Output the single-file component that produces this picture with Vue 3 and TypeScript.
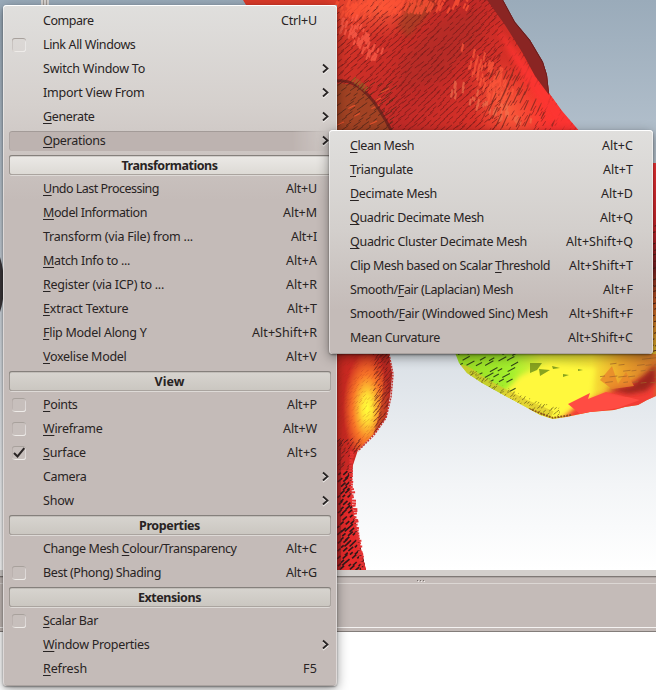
<script setup lang="ts">
import type { Directive } from 'vue'

interface Item {
  kind?: 'heading'
  label: string
  width: number
  key?: string
  keys?: string
  keysWidth?: number
  check?: boolean
  checked?: boolean
  sub?: boolean
  active?: boolean
  light?: boolean
}

const mainItems: Item[] = [
  { label: 'Compare', width: 50.5, keys: 'Ctrl+U', keysWidth: 36 },
  { label: 'Link All Windows', width: 92.5, check: true },
  { label: 'Switch Window To', width: 102, sub: true },
  { label: 'Import View From', width: 101.5, sub: true },
  { label: 'Generate', width: 51.5, key: 'G', sub: true },
  { label: 'Operations', width: 62.5, key: 'O', sub: true, active: true },
  { kind: 'heading', label: 'Transformations', width: 96, light: true },
  { label: 'Undo Last Processing', width: 116, key: 'U', keys: 'Alt+U', keysWidth: 31 },
  { label: 'Model Information', width: 104, key: 'M', keys: 'Alt+M', keysWidth: 34 },
  { label: 'Transform (via File) from ...', width: 150, keys: 'Alt+I', keysWidth: 26 },
  { label: 'Match Info to ...', width: 87, key: 'M', keys: 'Alt+A', keysWidth: 31 },
  { label: 'Register (via ICP) to ...', width: 121, key: 'R', keys: 'Alt+R', keysWidth: 31 },
  { label: 'Extract Texture', width: 85.5, key: 'E', keys: 'Alt+T', keysWidth: 30 },
  { label: 'Flip Model Along Y', width: 103.5, key: 'F', keys: 'Alt+Shift+R', keysWidth: 65 },
  { label: 'Voxelise Model', width: 83.5, key: 'V', keys: 'Alt+V', keysWidth: 31 },
  { kind: 'heading', label: 'View', width: 30 },
  { label: 'Points', width: 34.5, key: 'P', check: true, keys: 'Alt+P', keysWidth: 30 },
  { label: 'Wireframe', width: 59.5, key: 'W', check: true, keys: 'Alt+W', keysWidth: 34 },
  { label: 'Surface', width: 43, key: 'S', check: true, checked: true, keys: 'Alt+S', keysWidth: 30 },
  { label: 'Camera', width: 43.5, sub: true },
  { label: 'Show', width: 31, sub: true },
  { kind: 'heading', label: 'Properties', width: 61 },
  { label: 'Change Mesh Colour/Transparency', width: 193.5, key: 'C', keys: 'Alt+C', keysWidth: 31 },
  { label: 'Best (Phong) Shading', width: 118, check: true, keys: 'Alt+G', keysWidth: 31 },
  { kind: 'heading', label: 'Extensions', width: 63 },
  { label: 'Scalar Bar', width: 55, key: 'S', check: true },
  { label: 'Window Properties', width: 106.5, key: 'W', sub: true },
  { label: 'Refresh', width: 44, key: 'R', keys: 'F5', keysWidth: 14 },
]

const subItems: Item[] = [
  { label: 'Clean Mesh', width: 64, key: 'C', keys: 'Alt+C', keysWidth: 31 },
  { label: 'Triangulate', width: 63, key: 'T', keys: 'Alt+T', keysWidth: 30 },
  { label: 'Decimate Mesh', width: 87, key: 'D', keys: 'Alt+D', keysWidth: 32 },
  { label: 'Quadric Decimate Mesh', width: 134, key: 'Q', keys: 'Alt+Q', keysWidth: 33 },
  { label: 'Quadric Cluster Decimate Mesh', width: 177, key: 'Q', keys: 'Alt+Shift+Q', keysWidth: 67 },
  { label: 'Clip Mesh based on Scalar Threshold', width: 200, key: 'T', keys: 'Alt+Shift+T', keysWidth: 64 },
  { label: 'Smooth/Fair (Laplacian) Mesh', width: 163, key: 'F', keys: 'Alt+F', keysWidth: 30 },
  { label: 'Smooth/Fair (Windowed Sinc) Mesh', width: 198, key: 'F', keys: 'Alt+Shift+F', keysWidth: 64 },
  { label: 'Mean Curvature', width: 90, keys: 'Alt+Shift+C', keysWidth: 65 },
]

// Splits a label around its mnemonic; for the "Colour" entry the second capital C is the mnemonic.
function split(item: Item): [string, string, string] {
  if (!item.key) return [item.label, '', '']
  const at = item.label.startsWith('Change') ? item.label.indexOf('Colour') : item.label.indexOf(item.key)
  return [item.label.slice(0, at), item.key, item.label.slice(at + 1)]
}

// Tracks the text so that it fills the given column width.
const vFit: Directive<HTMLElement, number> = {
  mounted(el, binding) {
    const natural = el.getBoundingClientRect().width
    const count = (el.textContent ?? '').length
    el.style.letterSpacing = `${(binding.value - natural) / count}px`
  },
}

let seed = 7
function rnd(): number {
  seed = (seed * 16807) % 2147483647
  return seed / 2147483647
}

// Short slanted facets laid on a jittered grid.
function facets(x0: number, y0: number, x1: number, y1: number, dx: number, dy: number, slope: number, keep: number): string {
  let d = ''
  let row = 0
  for (let y = y0; y < y1; y += dy, row++) {
    for (let x = x0 + (row % 2) * dx * 0.5; x < x1; x += dx) {
      if (rnd() > keep) continue
      const px = x + rnd() * 1.6
      const py = y + rnd() * 1.6
      const len = dx * (0.45 + rnd() * 0.5)
      d += `M${px.toFixed(1)} ${py.toFixed(1)}l${len.toFixed(1)} ${(-len * slope).toFixed(1)}`
    }
  }
  return d
}

// Facets scattered around a centre line, thinning out with distance from it.
function scatter(x0: number, y0: number, x1: number, y1: number, spread: number, count: number, w: number, h: number): string {
  let d = ''
  for (let i = 0; i < count; i++) {
    const t = rnd()
    const off = (rnd() + rnd() - 1) * spread
    const x = x0 + (x1 - x0) * t + off
    const y = y0 + (y1 - y0) * t + (rnd() - 0.5) * spread * 0.6
    const s = 0.4 + rnd() * 0.8
    d += `M${x.toFixed(1)} ${y.toFixed(1)}l${(w * s).toFixed(1)} ${(-h * s).toFixed(1)}l${(1 + s).toFixed(1)} ${(h * 0.15).toFixed(1)}l${(-w * s).toFixed(1)} ${(h * s).toFixed(1)}z`
  }
  return d
}

const upperDark = facets(337, 0, 500, 132, 6.4, 3.4, 0.8, 0.85)
const upperDots = facets(480, 40, 580, 132, 4, 5, 1.6, 0.4)
const brightTop = scatter(345, 12, 455, 6, 22, 110, 4, 9)
const brightLeft = scatter(342, 20, 372, 58, 16, 45, 2.5, 7)
const brightMid = scatter(470, 55, 508, 108, 18, 70, 2, 9)
const brightLow = scatter(448, 90, 520, 125, 20, 40, 1.2, 7)
const upperSpots = facets(488, 78, 552, 130, 7, 8, 2.2, 0.4)
const brownLines = facets(337, 85, 390, 132, 8, 5, 0.7, 0.9)
const brownSparks = facets(337, 92, 385, 132, 11, 8, 0.5, 0.4)
const lobeDots = facets(337, 354, 394, 450, 3.5, 3.5, 1, 0.55)
const lobeEdge = facets(373, 354, 396, 440, 4, 2.6, 1.2, 0.9)
const neckDark = facets(337, 474, 368, 572, 5, 3.8, 0.9, 0.85)
const neckFine = facets(337, 440, 358, 474, 4, 3, 0.9, 0.7)
const greenLines = facets(457, 354, 512, 396, 9, 5.5, 0.55, 0.65)
const rimLines = facets(455, 372, 560, 420, 3.4, 3, 0.8, 0.6)
const orangeLines = facets(600, 352, 656, 384, 9, 6, 0.12, 0.6)
const sideLines = facets(650, 225, 658, 354, 4, 6, 0.3, 0.9)
const fringe = Array.from({ length: 44 }, (_, i) => {
  const y = 452 + i * 2.7
  const t = i / 43
  const x = 353 - Math.sin(Math.min(1, t * 2) * Math.PI) * 1.5 + t * t * 11
  return `M${(x - 3).toFixed(1)} ${y.toFixed(1)}l${(3 + rnd() * 2).toFixed(1)} ${(rnd() * 2 - 1).toFixed(1)}`
}).join('')
</script>

<template>
  <div class="screen">
    <svg class="scene" width="656" height="570" viewBox="0 0 656 570">
      <defs>
        <linearGradient id="sky" x1="0" y1="0" x2="0" y2="1">
          <stop offset="0" stop-color="#9aabba" />
          <stop offset=".25" stop-color="#b3c0cc" />
          <stop offset=".62" stop-color="#dae0e6" />
          <stop offset=".85" stop-color="#f3f5f7" />
          <stop offset="1" stop-color="#fff" />
        </linearGradient>
        <linearGradient id="upper" gradientUnits="userSpaceOnUse" x1="340" y1="0" x2="560" y2="130">
          <stop offset="0" stop-color="#dc3a29" />
          <stop offset=".2" stop-color="#cd2f27" />
          <stop offset=".45" stop-color="#c12a27" />
          <stop offset=".7" stop-color="#d83128" />
          <stop offset=".88" stop-color="#f8392f" />
          <stop offset="1" stop-color="#ff3434" />
        </linearGradient>
        <radialGradient id="glow">
          <stop offset="0" stop-color="#ff6a42" />
          <stop offset="1" stop-color="#ff5136" stop-opacity="0" />
        </radialGradient>
        <radialGradient id="lobe" gradientUnits="userSpaceOnUse" cx="0" cy="0" r="1" gradientTransform="translate(367 408) scale(24 56)">
          <stop offset="0" stop-color="#ffff3a" />
          <stop offset=".22" stop-color="#ffe236" />
          <stop offset=".6" stop-color="#f87628" />
          <stop offset="1" stop-color="#cb2a22" />
        </radialGradient>
        <linearGradient id="dish" gradientUnits="userSpaceOnUse" x1="455" y1="365" x2="656" y2="365">
          <stop offset="0" stop-color="#9adb24" />
          <stop offset=".28" stop-color="#a4f02d" />
          <stop offset=".43" stop-color="#e6f23a" />
          <stop offset=".68" stop-color="#f7e536" />
          <stop offset=".83" stop-color="#eca42a" />
          <stop offset="1" stop-color="#d1762a" />
        </linearGradient>
        <linearGradient id="side" gradientUnits="userSpaceOnUse" x1="0" y1="163" x2="0" y2="354">
          <stop offset="0" stop-color="#f23336" />
          <stop offset=".35" stop-color="#c7252b" />
          <stop offset=".55" stop-color="#751f22" />
          <stop offset=".75" stop-color="#ca6024" />
          <stop offset="1" stop-color="#d9b22b" />
        </linearGradient>
        <clipPath id="upperClip"><path d="M243 0H503L515 22L530 40L543 62L547 75L549 93L562 111L580 132H337V5H246Z" /></clipPath>
        <clipPath id="lobeClip"><path d="M330 350H388L392 374L390 395L386 417L374 434L358 450L353 465L351 485L352 505L357 530L361 549L366 570H330Z" /></clipPath>
        <clipPath id="dishClip"><path d="M454 350L459 363L467 373L482 383L500 393L524 406L540 415L553 419L566 417L590 412L614 410L625 407L638 405L647 400L656 396V350Z" /></clipPath>
        <clipPath id="rimClip"><path d="M450 362L467 366L500 384L535 401L560 408V424H450Z" /></clipPath>
        <filter id="soft"><feGaussianBlur stdDeviation="2.5" /></filter>
        <filter id="softer" x="-30%" y="-30%" width="160%" height="160%"><feGaussianBlur stdDeviation="5" /></filter>
      </defs>

      <rect width="656" height="570" fill="url(#sky)" />
      <path d="M0 257Q4 270 4 285T0 312Z" fill="#3b3639" />
      <path d="M41 0h8v6h-8z" fill="#d9d5d2" />
      <path d="M43.500 0v6M46.500 0v6" stroke="#a49d98" />

      <g clip-path="url(#upperClip)">
        <rect x="240" width="345" height="135" fill="url(#upper)" />
        <ellipse cx="380" cy="6" rx="56" ry="34" fill="url(#glow)" opacity=".8" />
        <ellipse cx="506" cy="108" rx="34" ry="56" fill="url(#glow)" opacity=".8" transform="rotate(-28 506 108)" />
        <path d="M398 26L410 0L440 0L408 38Z" fill="#983f22" opacity=".65" filter="url(#soft)" />
        <path d="M400 60L440 20L480 10L480 40L440 80L400 90Z" fill="#a52f25" opacity=".4" filter="url(#softer)" />
        <path :d="upperDark" stroke="#6e1c1a" stroke-width=".8" opacity=".85" />
        <path :d="upperDots" stroke="#6b1a1c" stroke-width=".9" opacity=".6" />
        <path :d="brightTop" fill="#ff5335" opacity=".75" />
        <path :d="brightLeft" fill="#fd5e49" opacity=".75" />
        <path :d="brightMid" fill="#ff5a3c" opacity=".7" />
        <path :d="brightLow" fill="#f07350" opacity=".65" />
        <path :d="upperSpots" stroke="#7d2a20" stroke-width="1.100" opacity=".8" />
        <path d="M494 24L520 55L542 82L582 134L560 130L525 82Z" fill="#fd3430" opacity=".8" filter="url(#soft)" />
        <path d="M487 0H510L560 65L549 95L535 76L522 52L505 25Z" fill="#8a2523" />
        <path d="M503 0L515 22L530 40L543 62L547 75L549 93" fill="none" stroke="#5f2020" stroke-width="1.500" />
        <path d="M337 84C361 80 378 104 391 132H337Z" fill="#a24223" />
        <path :d="brownLines" stroke="#5a2a1c" stroke-width=".9" />
        <path :d="brownSparks" stroke="#e0502c" stroke-width="1.200" />
        <path d="M337 81C361 78 378 105 392 132" fill="none" stroke="#5b1f1b" stroke-width="3" opacity=".7" />
        <path d="M353 79L367 90" stroke="#927028" stroke-width="6" stroke-dasharray="2 1" opacity=".6" />
      </g>

      <g clip-path="url(#lobeClip)">
        <rect x="330" y="350" width="66" height="220" fill="#cb2925" />
        <rect x="330" y="350" width="66" height="100" fill="url(#lobe)" />
        <path :d="lobeDots" stroke="#a63320" stroke-width=".6" opacity=".4" />
        <path d="M377 350Q386 365 383 390T373 435L400 420V350Z" fill="#a62720" opacity=".55" />
        <path :d="lobeEdge" stroke="#5b1b1a" stroke-width=".8" opacity=".8" />
        <path :d="neckFine" stroke="#64201d" stroke-width="1" />
        <path d="M330 470H370V570H330Z" fill="#e52a2a" />
        <path :d="neckDark" stroke="#33191a" stroke-width="1.600" />
        <path d="M337 440V570" stroke="#7c1b1c" stroke-width="8" opacity=".5" />
      </g>
      <path d="M389 354L393 374L391 397L386 418L374 435L358 451" fill="none" stroke="#c4302b" stroke-width="1.500" stroke-dasharray="2 1" />
      <path :d="fringe" stroke="#e53434" stroke-width="2" />

      <g clip-path="url(#dishClip)">
        <rect x="454" y="350" width="202" height="70" fill="url(#dish)" />
        <path d="M500 396L520 376L550 362L595 368L590 410L550 421Z" fill="#fff83c" filter="url(#soft)" />
        <path d="M556 424L578 405L602 395L622 386L656 374V424Z" fill="#f23c36" filter="url(#soft)" />
        <path d="M568 404L590 393L588 399L606 392L640 400L618 408L580 414Z" fill="#ff4c43" />
        <path d="M606 389L631 386L645 374L656 364V382L646 391L629 394Z" fill="#9d251f" filter="url(#soft)" />
        <path d="M600 380L612 366L618 384L626 372L634 386L612 389Z" fill="#e8862a" opacity=".8" />
        <path :d="greenLines" stroke="#344a18" stroke-width="1.100" />
        <path :d="orangeLines" stroke="#a0642a" stroke-width=".7" />
        <g clip-path="url(#rimClip)">
          <path d="M454 358L467 370L484 382L524 403L552 415" fill="none" stroke="#d8c42e" stroke-width="8" opacity=".7" />
          <path :d="rimLines" stroke="#5a4c18" stroke-width=".8" opacity=".8" />
        </g>
        <path d="M530 363L542 363L537 370L530 373ZM539 369L550 370L540 376ZM552 366L560 368L553 369ZM563 374L569 375L563 377ZM578 369L583 370L578 371Z" fill="#88a31f" />
        <path d="M529 409L553 418L572 415" fill="none" stroke="#8b531c" stroke-width="2" stroke-dasharray="2 1" />
      </g>
      <path d="M651 163H656V354H651Z" fill="url(#side)" />
      <path :d="sideLines" stroke="#4c2319" />
    </svg>

    <div class="splitter"><i></i><i></i><i></i></div>
    <div class="panel"></div>

    <div class="menu main-menu">
      <template v-for="(item, i) in mainItems" :key="i">
        <div v-if="item.kind" class="heading" :class="{ light: item.light }">
          <span v-fit="item.width">{{ item.label }}</span>
        </div>
        <div v-else class="row" :class="{ active: item.active }">
          <span v-if="item.check" class="box">
            <svg v-if="item.checked" width="14" height="14" viewBox="0 0 14 14">
              <path d="M2 7L5.500 10.500L12.300 2.200" fill="none" stroke="#2a2525" stroke-width="2" />
            </svg>
          </span>
          <span v-else class="no-box"></span>
          <span v-fit="item.width" class="label">{{ split(item)[0] }}<u v-if="item.key">{{ split(item)[1] }}</u>{{ split(item)[2] }}</span>
          <span v-if="item.keys" v-fit="item.keysWidth ?? 30" class="keys">{{ item.keys }}</span>
          <svg v-if="item.sub" class="arrow" width="8" height="12" viewBox="0 0 8 12">
            <path d="M1 3L5.700 7L1 11" fill="none" stroke="#f1eeec" stroke-width="1.500" />
            <path d="M1 1.500L5.500 5.500L1 9.500" fill="none" stroke="#292525" stroke-width="1.800" />
          </svg>
        </div>
      </template>
    </div>

    <div class="menu sub-menu">
      <div v-for="(item, i) in subItems" :key="i" class="row">
        <span v-fit="item.width" class="label">{{ split(item)[0] }}<u v-if="item.key">{{ split(item)[1] }}</u>{{ split(item)[2] }}</span>
        <span v-fit="item.keysWidth ?? 30" class="keys">{{ item.keys }}</span>
      </div>
    </div>
  </div>
</template>

<style>
body {
  overflow: hidden;
}
</style>

<style scoped>
.screen {
  position: relative;
  width: 656px;
  height: 690px;
  overflow: hidden;
  background: #fff;
  color: #282323;
  font: 12.5px/24px "Noto Sans", "Open Sans", sans-serif;
}
.scene {
  display: block;
}
.splitter {
  box-sizing: border-box;
  height: 14px;
  padding: 10px 0 0 417px;
  display: flex;
  gap: 2px;
  background: linear-gradient(#d3cfcc 0 6px, #7f7875 6px 7px, #aea6a3 7px 8px, #c4bbb8 8px 13px, #dcd7d4 13px);
}
.splitter i {
  width: 1px;
  height: 1px;
  background: #77706d;
  box-shadow: 1px 1px #eeeae8;
}
.panel {
  height: 48px;
  background: linear-gradient(#c4bbb8 0 43px, #f4f2f1 43px 44px, #c4bbb8 44px 47px, #837d7a 47px);
}
.menu {
  position: absolute;
  box-sizing: border-box;
  border-radius: 4px;
  box-shadow: 0 3px 12px rgba(0, 0, 0, 0.42), 0 1px 2px rgba(0, 0, 0, 0.4),
    inset 0 1px #fff, inset 1px 0 rgba(255, 255, 255, 0.45), inset -1px 0 rgba(255, 255, 255, 0.45), inset 0 -1px #aaa29f;
}
.main-menu {
  left: 3px;
  top: 5px;
  width: 334px;
  height: 681px;
  padding: 4px 6px;
  background: linear-gradient(#e0dfdd, #d5d0cd 100px, #c4bbb8 195px);
}
.sub-menu {
  left: 329px;
  top: 130px;
  width: 324px;
  height: 224px;
  padding: 4px 20px 4px 21px;
  background: linear-gradient(#e0dfdd, #d3cfcc 100px, #c4bbb8 180px);
}
.row {
  position: relative;
  display: flex;
  align-items: center;
  height: 24px;
  white-space: nowrap;
}
.main-menu .row {
  padding: 0 14px 0 3px;
}
.label,
.keys {
  position: relative;
  white-space: pre;
}
.heading span {
  padding-top: 2px;
  margin-right: 1px;
  white-space: pre;
}
.keys {
  margin-left: auto;
}
u {
  text-decoration: underline;
  text-decoration-thickness: 1px;
  text-underline-offset: 2px;
  text-decoration-skip-ink: none;
}
.active::before {
  content: "";
  position: absolute;
  inset: 2px 0;
  border-radius: 3px;
  background: #bdb3b0;
  box-shadow: inset 0 1px #a39b98, inset 1px 0 #aea6a3, 0 1px #ddd8d5;
  mask-image: linear-gradient(90deg, #000 88%, transparent 99%);
}
.box {
  position: relative;
  box-sizing: border-box;
  width: 14px;
  height: 14px;
  margin-right: 17px;
  border-radius: 3px;
  background: rgba(215, 209, 205, 0.2);
  box-shadow: inset 0 1px #a8a19c, inset 1px 0 rgba(160, 150, 145, 0.3), inset -1px 0 rgba(255, 255, 255, 0.4), inset 0 -1px #eeebe8;
}
.box svg {
  display: block;
}
.no-box {
  width: 14px;
  margin-right: 17px;
}
.arrow {
  position: relative;
  left: 13px;
  margin-left: auto;
}
.heading {
  height: 20px;
  margin: 2px 0;
  display: flex;
  justify-content: center;
  align-items: center;
  box-sizing: border-box;
  border-radius: 3px;
  background: linear-gradient(#d8d5d0, #cac6c0);
  box-shadow: inset 0 1px #85807c, inset 0 2px rgba(130, 125, 120, 0.25), inset 1px 0 #9d9792, inset -1px 0 #aaa49f, inset 0 -1px #aaa49f, 0 1px #dedad7;
  font-weight: 700;
}
.heading.light {
  background: linear-gradient(#eceae7, #dcd9d4);
}
</style>
